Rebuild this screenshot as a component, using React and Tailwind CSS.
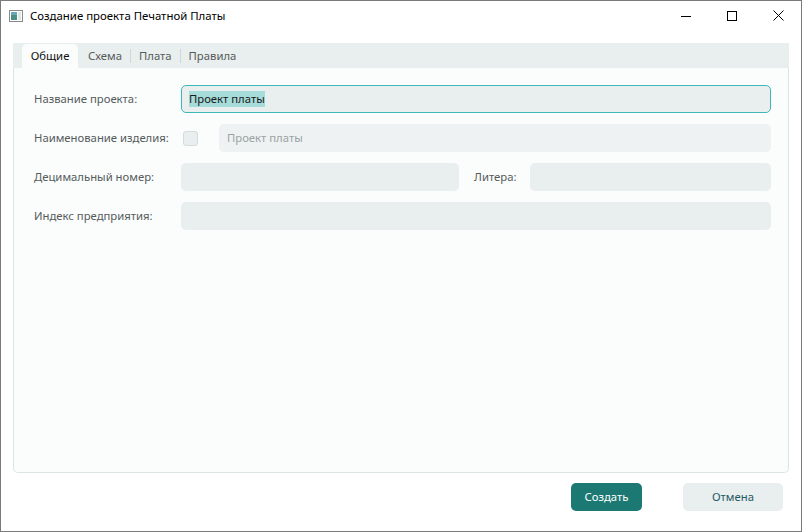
import React from "react";

const font = { fontFamily: '"Noto Sans", "Open Sans", sans-serif' };

const Field = ({ placeholder, disabled, className = "" }) => (
  <div
    className={`h-[28px] rounded-[5px] flex items-center px-2 text-[11.3px] ${
      disabled ? "bg-[#eef2f2] text-[#9aa3a3]" : "bg-[#e9eeee] text-[#222]"
    } ${className}`}
  >
    {placeholder}
  </div>
);

const Label = ({ children, className = "" }) => (
  <div className={`text-[11.3px] text-[#555b5b] ${className}`}>{children}</div>
);

export default function App() {
  return (
    <div
      style={font}
      className="w-[802px] h-[532px] border border-[#7a7a7a] bg-white flex flex-col"
    >
      {/* title bar */}
      <div className="h-[29px] flex items-center shrink-0">
        <svg width="14" height="12" viewBox="0 0 14 12" className="ml-[8px] mt-[1px]">
          <rect x="0.5" y="0.5" width="13" height="11" fill="#fff" stroke="#8a8a8a" />
          <rect x="2" y="2" width="6" height="8" fill="#4a8f86" />
          <rect x="2" y="2" width="6" height="3" fill="#6aa6b8" />
          <rect x="9" y="2" width="3" height="8" fill="#dfe7e4" />
        </svg>
        <span className="ml-[7px] text-[11.4px] text-black">Создание проекта Печатной Платы</span>
        <div className="ml-auto flex items-center h-full">
          <div className="w-[46px] h-full flex items-center justify-center">
            <svg width="10" height="10" viewBox="0 0 10 10">
              <path d="M0 5.5h10" stroke="#000" strokeWidth="1" />
            </svg>
          </div>
          <div className="w-[46px] h-full flex items-center justify-center">
            <svg width="10" height="10" viewBox="0 0 10 10">
              <rect x="0.5" y="0.5" width="9" height="9" fill="none" stroke="#000" />
            </svg>
          </div>
          <div className="w-[46px] h-full flex items-center justify-center">
            <svg width="11" height="11" viewBox="0 0 11 11">
              <path d="M0.5 0.5l10 10M10.5 0.5l-10 10" stroke="#000" strokeWidth="1" />
            </svg>
          </div>
        </div>
      </div>

      <div className="flex-1 flex flex-col px-3 pt-[13px]">
        {/* tabs */}
        <div className="h-[25px] bg-[#e9eeee] flex items-end pl-[9px] text-[11.3px]">
          <div className="h-[24px] w-[56px] bg-[#fbfdfd] rounded-t-[5px] flex items-center justify-center text-[#111]">
            Общие
          </div>
          <div className="h-[24px] flex items-center text-[#555b5b]">
            <span className="pl-[10px] pr-[8px]">Схема</span>
            <span className="w-px h-[14px] bg-[#cfd6d6]" />
            <span className="px-[8px]">Плата</span>
            <span className="w-px h-[14px] bg-[#cfd6d6]" />
            <span className="px-[8px]">Правила</span>
          </div>
        </div>

        {/* panel */}
        <div className="h-[405px] border border-t-0 border-[#dce5e5] rounded-b-[5px] bg-[#fbfdfd] pt-[17px] pl-[20px] pr-[17px] flex flex-col gap-[11px]">
          <div className="flex items-center">
            <Label className="w-[147px]">Название проекта:</Label>
            <div className="flex-1 h-[28px] rounded-[5px] border border-[#3fb6b8] bg-[#e9eeee] flex items-center px-[7px] text-[11.3px] text-[#1a1a1a]">
              <span className="bg-[#a6dcd9]">Проект платы</span>
            </div>
          </div>
          <div className="flex items-center">
            <Label className="w-[147px]">Наименование изделия:</Label>
            <div className="w-[15px] h-[15px] ml-[2px] rounded-[3px] border border-[#d3dddd] bg-[#e9eeee]" />
            <Field className="flex-1 ml-[21px]" placeholder="Проект платы" disabled />
          </div>
          <div className="flex items-center">
            <Label className="w-[147px]">Децимальный номер:</Label>
            <Field className="w-[278px]" />
            <Label className="ml-[15px] w-[56px]">Литера:</Label>
            <Field className="flex-1" />
          </div>
          <div className="flex items-center">
            <Label className="w-[147px]">Индекс предприятия:</Label>
            <Field className="flex-1" />
          </div>
        </div>

        {/* buttons */}
        <div className="flex justify-end mt-[10px] pr-[6px] gap-[41px] text-[11.3px]">
          <button className="w-[71px] h-[28px] rounded-[5px] bg-[#1b7873] text-white">
            Создать
          </button>
          <button className="w-[100px] h-[28px] rounded-[5px] bg-[#e9eeee] text-[#1e5a66]">
            Отмена
          </button>
        </div>
      </div>
    </div>
  );
}
